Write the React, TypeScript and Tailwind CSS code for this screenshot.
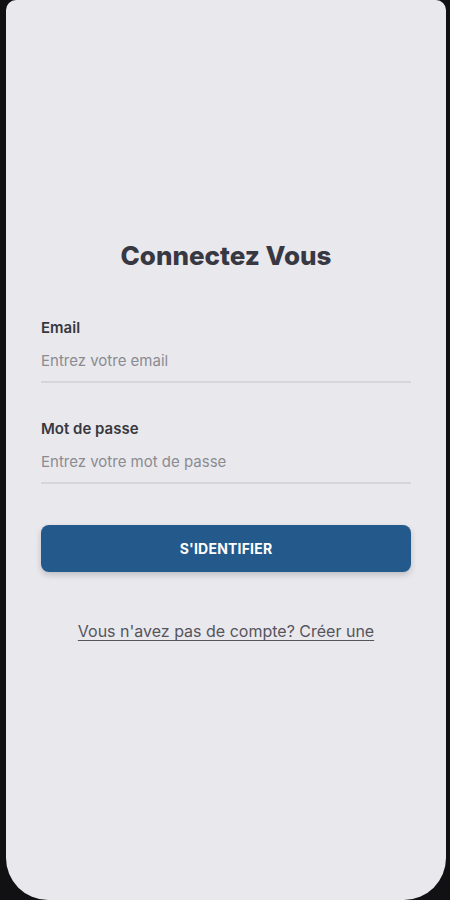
export default function App() {
  return (
    <div className="h-[900px] w-[450px] overflow-hidden bg-[#111113]">
      <div
        className="ml-[6px] mr-[4px] h-[900px] rounded-b-[42px] rounded-t-[10px] bg-[#e9e8ed] px-[35px] pt-[238px]"
        style={{ fontFamily: 'Inter, "Liberation Sans", sans-serif' }}
      >
        <h1 className="text-center text-[26px] font-extrabold leading-[36px] text-[#383842]">
          Connectez Vous
        </h1>

        <div className="mt-[44px]">
          <label className="block text-[15px] font-semibold leading-[20px] text-[#38383f]">Email</label>
          <div className="mt-[13px] text-[15px] leading-[20px] text-[#8b8b92]">Entrez votre email</div>
          <div className="mt-[10px] h-[2px] bg-[#d6d5db]" />
        </div>

        <div className="mt-[36px]">
          <label className="block text-[15px] font-semibold leading-[20px] text-[#38383f]">Mot de passe</label>
          <div className="mt-[13px] text-[15px] leading-[20px] text-[#8b8b92]">Entrez votre mot de passe</div>
          <div className="mt-[10px] h-[2px] bg-[#d6d5db]" />
        </div>

        <button className="mt-[41px] flex h-[47px] w-full items-center justify-center rounded-[8px] bg-[#235a8b] text-[14px] font-bold tracking-[0.2px] text-white shadow-[0_3px_6px_rgba(0,0,0,0.18)]">
          S'IDENTIFIER
        </button>

        <p className="mt-[49px] text-center text-[16px] leading-[20px] text-[#55555c] underline underline-offset-[3px]">
          Vous n'avez pas de compte? Créer une
        </p>
      </div>
    </div>
  )
}
